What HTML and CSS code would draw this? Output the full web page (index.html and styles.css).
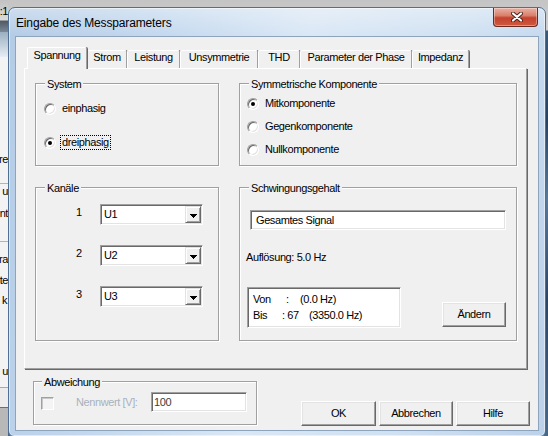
FILE: index.html
```html
<!DOCTYPE html>
<html>
<head>
<meta charset="utf-8">
<title>Eingabe des Messparameters</title>
<link rel="stylesheet" href="styles.css">
</head>
<body>
<div class="bgapp">
  <div class="strip">
    <div class="s-top"><span>:1</span></div>
    <div class="s-dark"></div>
    <div class="s-glass"></div>
    <div class="s-row s-re"><span>re</span></div>
    <div class="s-row s-u s-line"><span>u</span></div>
    <div class="s-row s-nt"><span>nt</span></div>
    <div class="s-row s-ra s-line"><span>ra</span></div>
    <div class="s-row s-te"><span>te</span></div>
    <div class="s-row s-k"><span>k</span></div>
    <div class="s-row s-u2"><span>u</span></div>
    <div class="s-bottom"></div>
  </div>
  <div class="under"></div>
</div>

<div class="dialog">
  <div class="titlebar">
    <span class="title">Eingabe des Messparameters</span>
    <div class="close">
      <svg width="12" height="10" viewBox="0 0 12 10">
        <path d="M2 1.5 L10 8.5 M10 1.5 L2 8.5" stroke="#4a2019" stroke-width="4" stroke-linecap="round"/>
        <path d="M2 1.5 L10 8.5 M10 1.5 L2 8.5" stroke="#ffffff" stroke-width="2.2" stroke-linecap="round"/>
      </svg>
    </div>
  </div>
  <div class="client">
    <div class="tabctl">
      <div class="tabs">
        <div class="tab sel w-span">Spannung</div>
        <div class="tab w-strom">Strom</div>
        <div class="tab w-leist">Leistung</div>
        <div class="tab w-unsym">Unsymmetrie</div>
        <div class="tab w-thd">THD</div>
        <div class="tab w-param">Parameter der Phase</div>
        <div class="tab w-imp">Impedanz</div>
      </div>
      <div class="panel">
        <div class="grid">
          <div class="group">
            <div class="legend">System</div>
            <div class="radios sys">
              <div class="radio"><span class="rb"></span><span class="rt">einphasig</span></div>
              <div class="radio"><span class="rb on"></span><span class="rt focus">dreiphasig</span></div>
            </div>
          </div>
          <div class="group">
            <div class="legend">Symmetrische Komponente</div>
            <div class="radios sym">
              <div class="radio"><span class="rb on"></span><span class="rt">Mitkomponente</span></div>
              <div class="radio"><span class="rb"></span><span class="rt">Gegenkomponente</span></div>
              <div class="radio"><span class="rb"></span><span class="rt">Nullkomponente</span></div>
            </div>
          </div>
          <div class="group">
            <div class="legend">Kanäle</div>
            <div class="channels">
              <div class="chrow"><span class="klabel">1</span><div class="combo sunken"><span class="ctext">U1</span><span class="ddbtn"><svg width="7" height="4" viewBox="0 0 7 4" shape-rendering="crispEdges"><rect x="0" y="0" width="7" height="1"/><rect x="1" y="1" width="5" height="1"/><rect x="2" y="2" width="3" height="1"/><rect x="3" y="3" width="1" height="1"/></svg></span></div></div>
              <div class="chrow"><span class="klabel">2</span><div class="combo sunken"><span class="ctext">U2</span><span class="ddbtn"><svg width="7" height="4" viewBox="0 0 7 4" shape-rendering="crispEdges"><rect x="0" y="0" width="7" height="1"/><rect x="1" y="1" width="5" height="1"/><rect x="2" y="2" width="3" height="1"/><rect x="3" y="3" width="1" height="1"/></svg></span></div></div>
              <div class="chrow"><span class="klabel">3</span><div class="combo sunken"><span class="ctext">U3</span><span class="ddbtn"><svg width="7" height="4" viewBox="0 0 7 4" shape-rendering="crispEdges"><rect x="0" y="0" width="7" height="1"/><rect x="1" y="1" width="5" height="1"/><rect x="2" y="2" width="3" height="1"/><rect x="3" y="3" width="1" height="1"/></svg></span></div></div>
            </div>
          </div>
          <div class="group">
            <div class="legend">Schwingungsgehalt</div>
            <div class="sfield sunken">Gesamtes Signal</div>
            <div class="aufl">Auflösung: 5.0 Hz</div>
            <div class="vbline">
              <div class="vb sunken">
                <div class="vbrow"><span class="c1">Von</span><span class="c2">:</span><span>(0.0 Hz)</span></div>
                <div class="vbrow"><span class="c1b">Bis</span><span class="c2b">: 67</span><span>(3350.0 Hz)</span></div>
              </div>
              <div class="btn raised aendern">Ändern</div>
            </div>
          </div>
        </div>
      </div>
    </div>
    <div class="bottom">
      <div class="group abw">
        <div class="legend">Abweichung</div>
        <div class="abwrow">
          <span class="chk"></span>
          <span class="nenn">Nennwert [V]:</span>
          <div class="nfield sunken">100</div>
        </div>
      </div>
      <div class="buttons">
        <div class="btn raised b-ok">OK</div>
        <div class="btn raised b-abb">Abbrechen</div>
        <div class="btn raised b-hilfe">Hilfe</div>
      </div>
    </div>
  </div>
</div>
</body>
</html>
```

FILE: styles.css
```css
* { box-sizing: border-box; }
html, body { margin: 0; padding: 0; }
body {
  width: 548px;
  height: 436px;
  overflow: hidden;
  position: relative;
  font-family: "Liberation Sans", Arial, sans-serif;
  font-size: 11px;
  letter-spacing: -0.4px;
  line-height: 13px;
  color: #000;
  background: #c8c8c8;
}

/* ---------- background application ---------- */
.bgapp { display: flex; width: 548px; height: 436px; }
.strip {
  width: 8px;
  flex: none;
  display: flex;
  flex-direction: column;
  overflow: hidden;
  background: #f3f3f3;
}
.under {
  flex: 1;
  background: linear-gradient(#c4c4c4 0, #d0d0d0 30px, #3a5878 31px, #27425f 120px, #5a7899 200px, #2c4563 300px, #4a6787 436px);
}
.s-top {
  height: 21px; flex: none;
  background: linear-gradient(#c2c2c2, #dadada);
  border-bottom: 1px solid #9a9a9a;
  display: flex; justify-content: flex-end; align-items: flex-end;
  padding-bottom: 2px;
  white-space: nowrap;
}
.s-dark { height: 11px; flex: none; background: linear-gradient(#4e5a66, #7b8895); }
.s-glass { height: 25px; flex: none; background: linear-gradient(#9aafc2, #e6edf3); }
.s-row { height: 14px; flex: none; display: flex; justify-content: flex-end; white-space: nowrap; }
.s-line { border-top: 1px solid #b4b4b4; }
.s-re { margin-top: 96px; }
.s-u { margin-top: 16px; height: 15px; padding-top: 1px; }
.s-nt { margin-top: 9px; }
.s-ra { margin-top: 20px; height: 25px; padding-top: 11px; }
.s-te { margin-top: 8px; }
.s-k { margin-top: 6px; padding-right: 1px; }
.s-u2 { margin-top: 57px; }
.s-bottom { flex: 1; margin-top: 8px; border-top: 1px solid #a8a8a8; background: linear-gradient(#ececec 0 19px, #6d6d6d 19px 20px, #b8b8b8 20px); }

/* ---------- dialog window ---------- */
.dialog {
  position: absolute;
  left: 8px;
  top: 7px;
  width: 538px;
  height: 430px;
  border: 1px solid #4f6f94;
  border-radius: 7px 7px 6px 6px;
  padding: 0 6px 5px;
  display: flex;
  flex-direction: column;
  background:
    linear-gradient(rgba(255,255,255,0.35), rgba(255,255,255,0) 28px),
    linear-gradient(100deg, #b3cbe6 0%, #c3d8ee 25%, #dae7f5 50%, #d0e1f2 75%, #bcd2ea 100%);
  box-shadow: inset 0 0 0 1px rgba(255,255,255,0.5);
}
.titlebar { height: 28px; flex: none; display: flex; align-items: flex-start; }
.title { padding: 9px 0 0 1px; font-size: 12px; letter-spacing: -0.15px; line-height: 13px; color: #000; }
.close {
  margin-left: auto;
  margin-right: 1px;
  width: 45px;
  height: 19px;
  border: 1px solid #6a2a20;
  border-top: none;
  border-radius: 0 0 4px 4px;
  background: linear-gradient(#eab0a3 0%, #d9806c 42%, #c5412d 55%, #cf5a40 100%);
  box-shadow: inset 0 0 0 1px rgba(255,255,255,0.35);
  display: flex;
  align-items: center;
  justify-content: center;
  padding-left: 2px;
}
.close svg { display: block; }

.client {
  height: 395px;
  flex: none;
  border: 1px solid #8ea3bc;
  background: #f0f0f0;
  display: flex;
  flex-direction: column;
}

/* ---------- tab control ---------- */
.tabctl { margin: 10px 11px 0 8px; }
.tabs {
  display: flex;
  align-items: flex-end;
  height: 21px;
  margin-left: 3px;
  position: relative;
  z-index: 1;
}
.tab {
  height: 18px;
  border: 1px solid #fff;
  border-bottom: none;
  border-right-color: #a0a0a0;
  box-shadow: 1px 0 0 #696969;
  border-radius: 2px 2px 0 0;
  text-align: center;
  white-space: nowrap;
  background: #f0f0f0;
}
.tab.sel { height: 22px; margin-bottom: -1px; padding-top: 1px; position: relative; z-index: 2; }
.w-span { width: 60px; }
.w-strom { width: 40px; }
.w-leist { width: 53px; }
.w-unsym { width: 78px; }
.w-thd { width: 42px; }
.w-param { width: 112px; }
.w-imp { width: 57px; }

.panel {
  height: 301px;
  border: 1px solid #fff;
  border-right-color: #a0a0a0;
  border-bottom-color: #a0a0a0;
  box-shadow: 1px 1px 0 #696969;
  padding: 14px 9px 0 10px;
}
.grid {
  display: grid;
  grid-template-columns: 184px 278px;
  grid-template-rows: 83px 154px;
  column-gap: 20px;
  row-gap: 21px;
}

/* ---------- group boxes ---------- */
.group {
  border: 1px solid #a0a0a0;
  box-shadow: inset 1px 1px 0 #fff, 1px 1px 0 #fff;
}
.legend {
  width: fit-content;
  margin: -6px 0 0 9px;
  padding: 0 2px;
  background: #f0f0f0;
  white-space: nowrap;
}

.radios { display: flex; flex-direction: column; }
.radios.sys { padding-left: 8px; margin-top: 10px; gap: 19px; }
.radios.sym { padding-left: 7px; margin-top: 5px; gap: 8px; }
.radio { display: flex; align-items: center; height: 15px; }
.rb {
  width: 12px;
  height: 12px;
  flex: none;
  border-radius: 50%;
  background: #fff;
  border: 1px solid;
  border-color: #a0a0a0 #fff #fff #a0a0a0;
  box-shadow: inset 1px 1px 0 #696969, inset -1px -1px 0 #e3e3e3;
  position: relative;
  margin-right: 4px;
}
.rb.on::after {
  content: "";
  position: absolute;
  left: 3px;
  top: 3px;
  width: 4px;
  height: 4px;
  border-radius: 50%;
  background: #000;
}
.rt { border: 1px dotted transparent; padding: 0 1px; white-space: nowrap; }
.rt.focus { border-color: #000; }

/* ---------- 3D styles ---------- */
.sunken {
  background: #fff;
  border: 1px solid;
  border-color: #a0a0a0 #fff #fff #a0a0a0;
  box-shadow: inset 1px 1px 0 #696969, inset -1px -1px 0 #e3e3e3;
}
.raised {
  background: #f0f0f0;
  border: 1px solid;
  border-color: #fff #696969 #696969 #fff;
  box-shadow: inset -1px -1px 0 #a0a0a0, inset 1px 1px 0 #e3e3e3;
}

/* ---------- channels ---------- */
.channels { display: flex; flex-direction: column; gap: 20px; margin-top: 9px; padding-left: 40px; }
.chrow { display: flex; align-items: flex-start; height: 21px; }
.klabel { width: 24px; margin-top: 2px; }
.combo {
  width: 103px;
  height: 21px;
  padding: 1px;
  display: flex;
  align-items: center;
}
.ctext { flex: 1; padding-left: 2px; }
.ddbtn {
  width: 16px;
  height: 17px;
  flex: none;
  background: #f0f0f0;
  border: 1px solid;
  border-color: #e3e3e3 #696969 #696969 #e3e3e3;
  box-shadow: inset 1px 1px 0 #fff, inset -1px -1px 0 #a0a0a0;
  display: flex;
  align-items: center;
  justify-content: center;
  padding-top: 2px;
  padding-left: 1px;
}
.ddbtn svg { display: block; fill: #000; }

/* ---------- Schwingungsgehalt ---------- */
.sfield {
  width: 256px;
  height: 20px;
  margin: 15px 0 0 10px;
  padding: 2px 0 0 5px;
  line-height: 15px;
}
.aufl { margin: 21px 0 0 6px; }
.vbline { display: flex; align-items: flex-end; margin-top: 23px; }
.vb {
  width: 154px;
  height: 41px;
  margin-left: 7px;
  padding: 3px 0 0 5px;
}
.vbrow { display: flex; line-height: 16px; white-space: nowrap; }
.c1 { width: 33px; }
.c2 { width: 14px; }
.c1b { width: 29px; }
.c2b { width: 27px; }

.btn {
  height: 25px;
  display: flex;
  align-items: center;
  justify-content: center;
  white-space: nowrap;
}
.aendern { width: 64px; margin-left: auto; margin-right: 10px; margin-bottom: 1px; }

/* ---------- bottom row ---------- */
.bottom {
  display: flex;
  align-items: flex-end;
  margin-top: 12px;
  padding: 0 8px 0 17px;
}
.abw { width: 224px; height: 44px; margin-bottom: 1px; }
.abw .legend { margin-left: 8px; }
.abwrow { display: flex; align-items: center; height: 20px; margin-top: 3px; }
.chk {
  width: 13px;
  height: 13px;
  flex: none;
  margin: 2px 0 0 7px;
  background: #f4f4f4;
  border: 1px solid;
  border-color: #a0a0a0 #fff #fff #a0a0a0;
  box-shadow: inset 1px 1px 0 #c8c8c8;
}
.nenn { width: 75px; margin-left: 22px; color: #a9b0bd; white-space: nowrap; }
.nfield { width: 96px; height: 20px; padding: 2px 0 0 2px; line-height: 15px; color: #3c3c3c; }

.buttons { display: flex; gap: 3px; margin-left: auto; }
.b-ok { width: 75px; }
.b-abb { width: 74px; }
.b-hilfe { width: 74px; }
```
